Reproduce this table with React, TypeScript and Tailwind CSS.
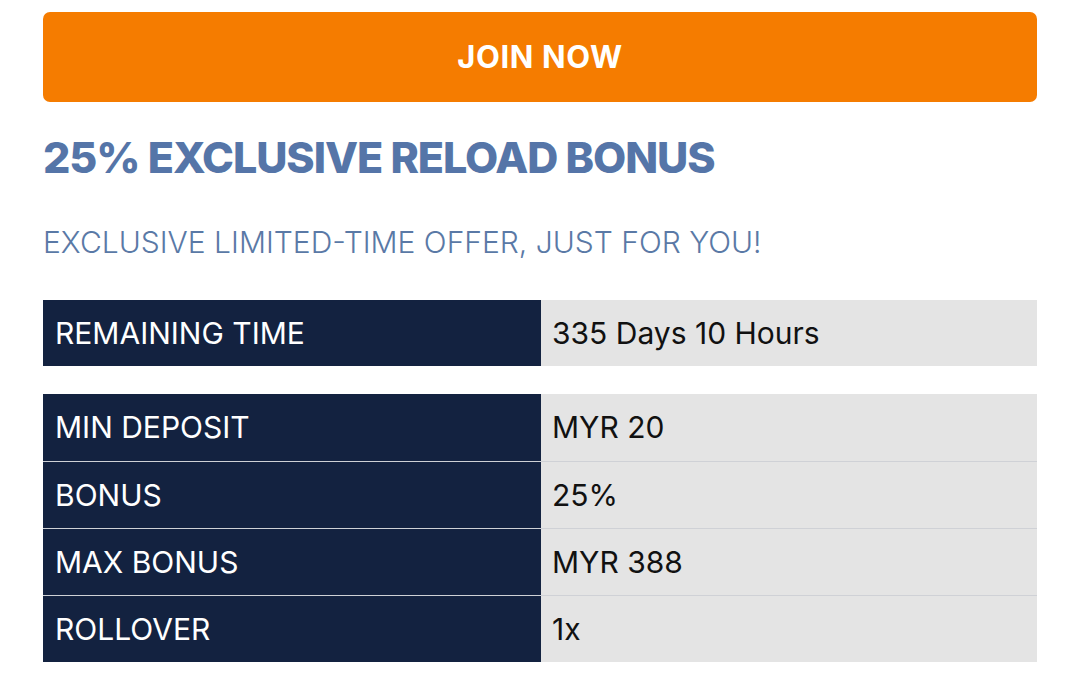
export default function App() {
  const details = [
    { label: "MIN DEPOSIT", value: "MYR 20" },
    { label: "BONUS", value: "25%" },
    { label: "MAX BONUS", value: "MYR 388" },
    { label: "ROLLOVER", value: "1x" },
  ];

  return (
    <div className="min-h-screen bg-white px-[43px] pt-[12px]" style={{ fontFamily: "Inter, 'Noto Sans', sans-serif" }}>
      {/* Join button */}
      <button className="w-full h-[90px] rounded-[7px] bg-[#f57c00] text-white font-bold text-[31px] tracking-[0.6px]">
        JOIN NOW
      </button>

      {/* Title */}
      <h1 className="mt-[31px] text-[#5575a8] font-extrabold text-[43px] leading-[48px] tracking-tight">
        25% EXCLUSIVE RELOAD BONUS
      </h1>
      <p className="mt-[44px] text-[#5a79a6] font-light text-[30px] leading-[34px]">
        EXCLUSIVE LIMITED-TIME OFFER, JUST FOR YOU!
      </p>

      {/* Remaining time */}
      <div className="mt-[41px] grid grid-cols-[498px_1fr] h-[66px] text-[30px]">
        <div className="bg-[#132240] text-white flex items-center px-[12px]">REMAINING TIME</div>
        <div className="bg-[#e4e4e4] text-[#111] flex items-center pl-[11px] pr-[12px]">335 Days 10 Hours</div>
      </div>

      {/* Details */}
      <div className="mt-[28px] flex flex-col">
        {details.map((row, i) => (
          <div key={row.label} className={`grid grid-cols-[498px_1fr] h-[67px] text-[30px] ${i > 0 ? "border-t border-[#cfd1d6]" : ""}`}>
            <div className="bg-[#132240] text-white flex items-center px-[12px]">{row.label}</div>
            <div className="bg-[#e4e4e4] text-[#111] flex items-center pl-[11px] pr-[12px]">{row.value}</div>
          </div>
        ))}
      </div>
    </div>
  );
}
